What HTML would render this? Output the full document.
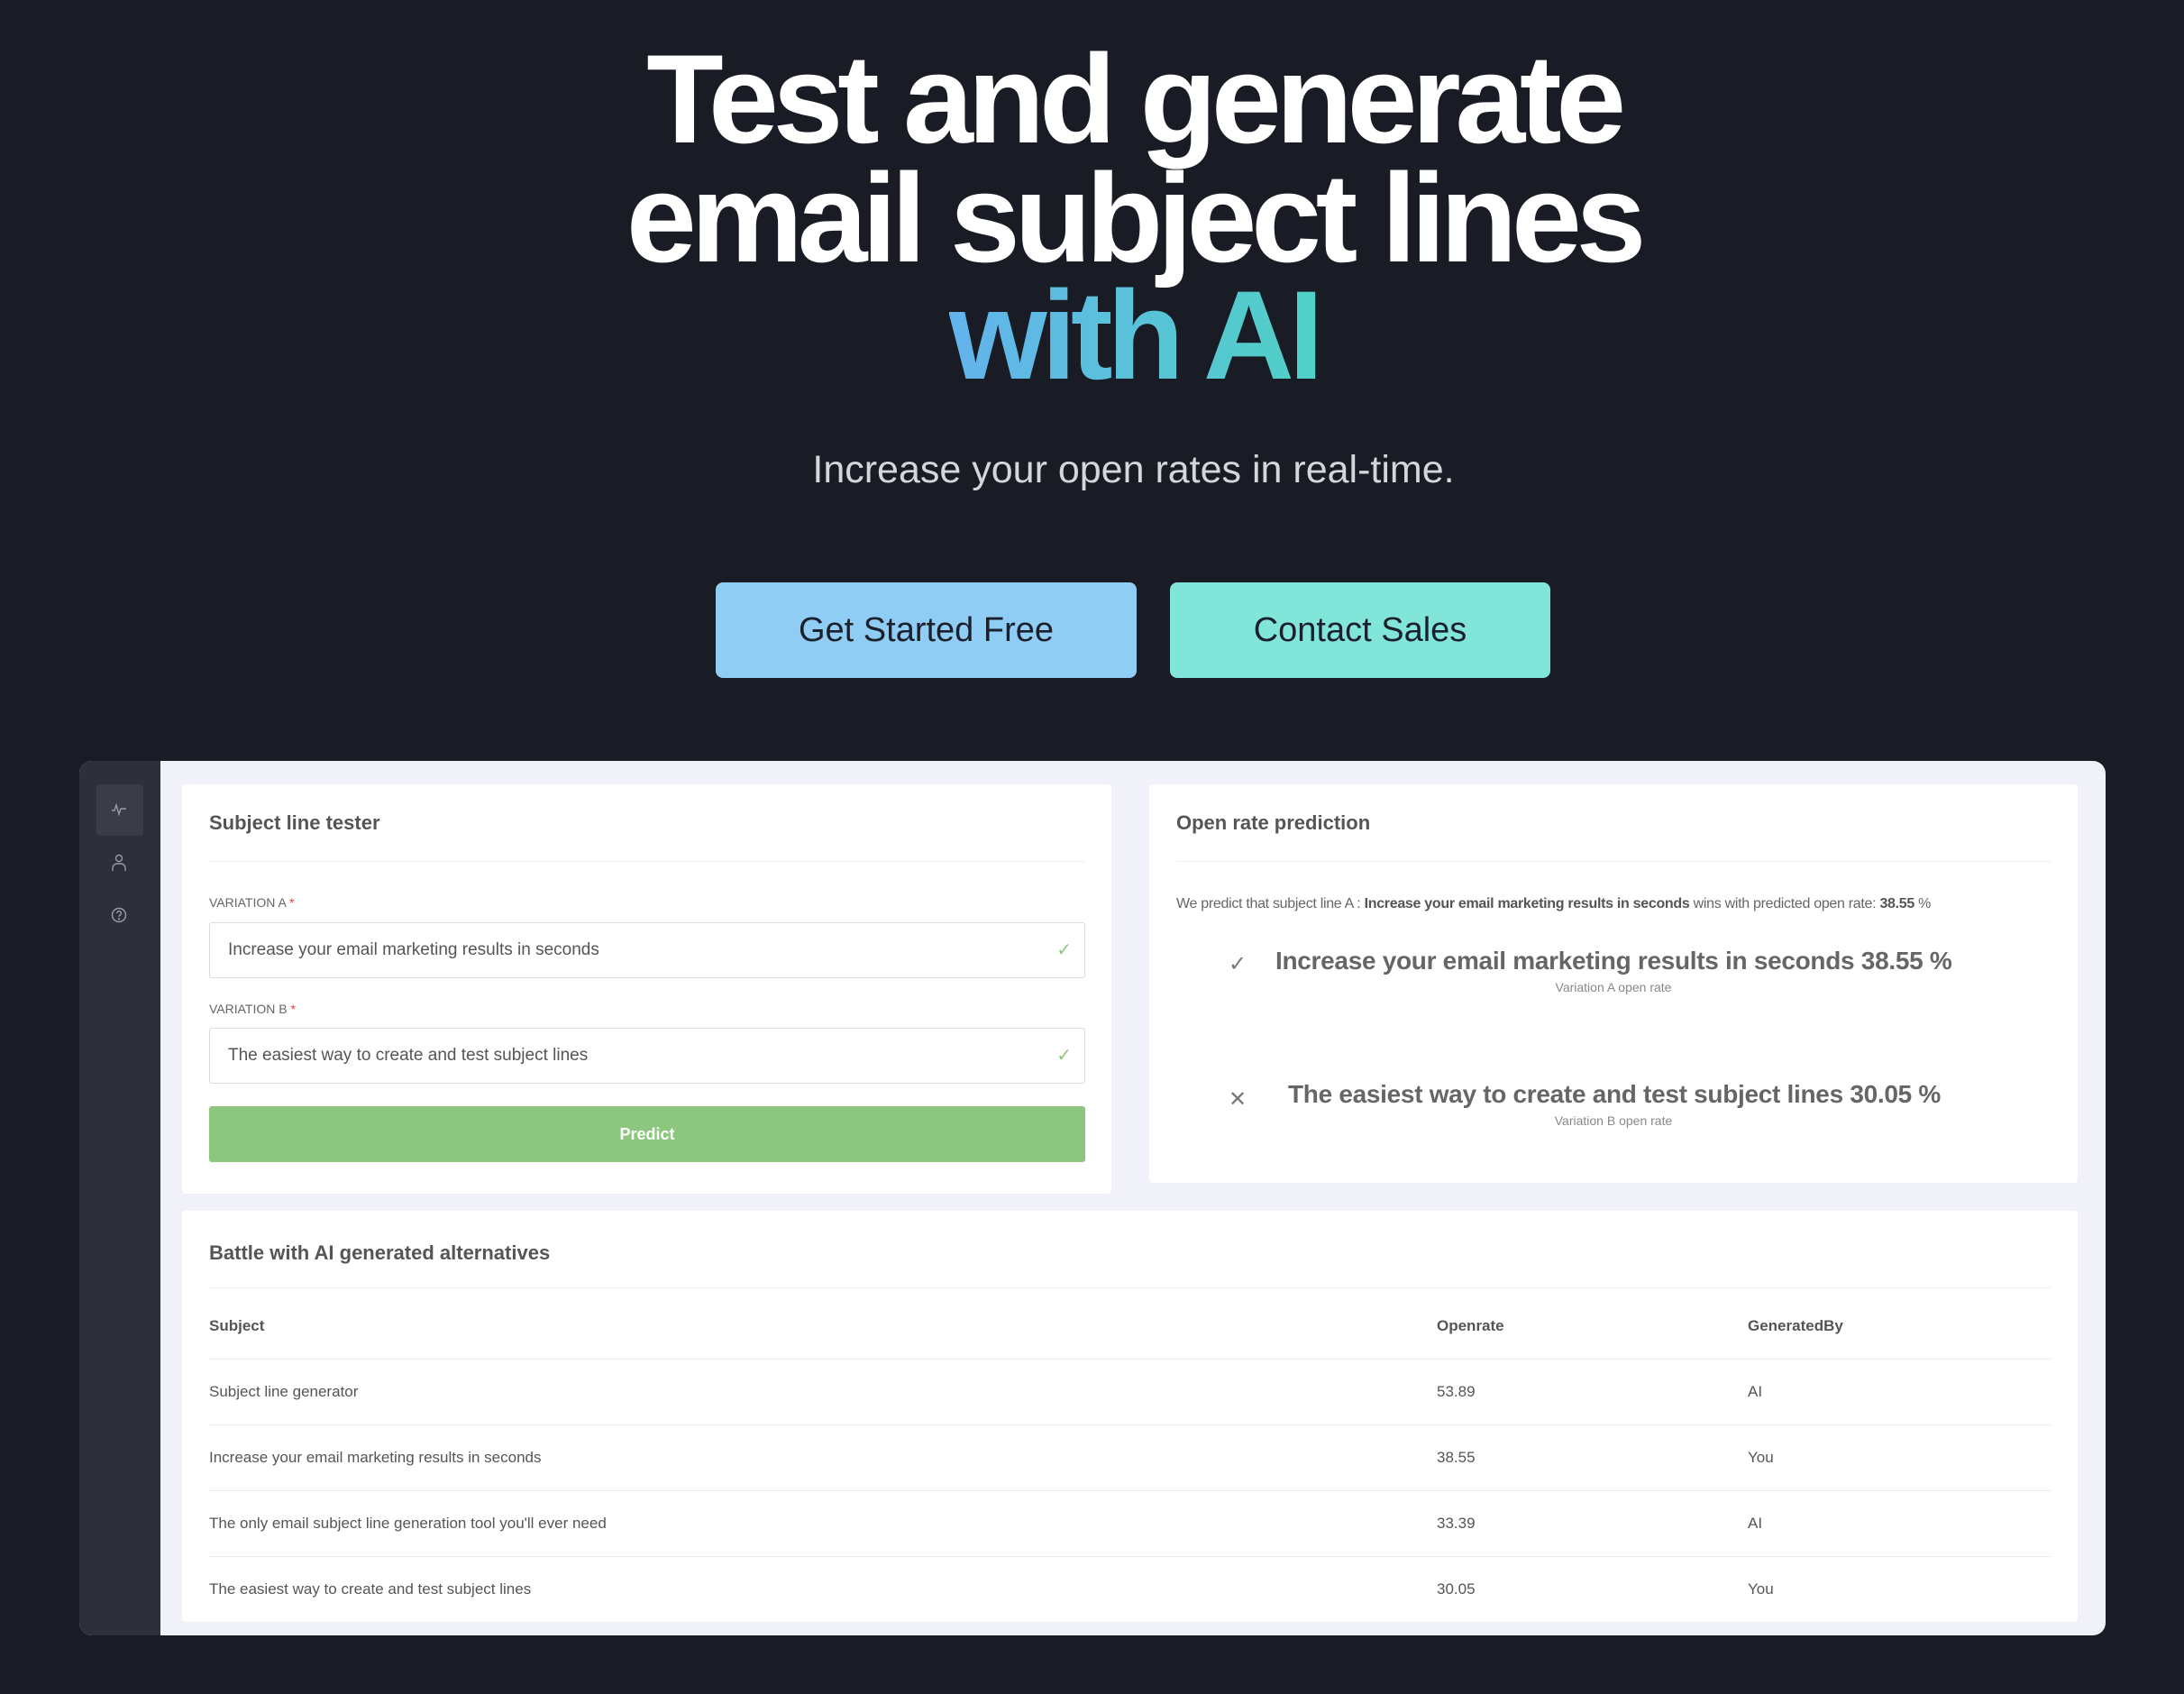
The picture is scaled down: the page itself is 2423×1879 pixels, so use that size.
<!DOCTYPE html>
<html><head><meta charset="utf-8"><style>
*{margin:0;padding:0;box-sizing:border-box}
body{width:2423px;height:1879px;background:#1a1c25;font-family:"Liberation Sans",sans-serif;position:relative;overflow:hidden}
.h{position:absolute;left:46px;width:2423px;text-align:center;color:#fff;font-weight:700;font-size:140px;letter-spacing:-6.3px;line-height:131px}
.grad{background:linear-gradient(90deg,#63b3ed,#4fd1c5);-webkit-background-clip:text;background-clip:text;color:transparent}
.sub{position:absolute;top:497px;left:46px;width:2423px;text-align:center;color:#d4d6dd;font-size:43px}
.btn{position:absolute;top:646px;height:106px;border-radius:8px;font-size:38px;color:#1a202c;display:flex;align-items:center;justify-content:center;font-weight:500}
.panel{position:absolute;left:88px;top:844px;width:2248px;height:970px;background:#f1f2f9;border-radius:14px;overflow:hidden}
.side{position:absolute;left:0;top:0;width:90px;height:100%;background:#2d2f3a}
.card{position:absolute;background:#fff;border-radius:4px}
.t{position:absolute;color:#555;font-size:22px;font-weight:700}
.div{position:absolute;height:1px;background:#eeeef2}
.lbl{position:absolute;font-size:14px;color:#666}
.lbl b{color:#e53e3e;font-weight:400}
.inp{position:absolute;left:30px;width:972px;height:62px;border:1px solid #ddd;border-radius:3px;font-size:19px;color:#555;padding-left:20px;line-height:60px}
.inp span{position:absolute;right:14px;color:#8dc67e;font-size:20px}
.row{position:absolute;left:30px;right:30px;font-size:17px;color:#555;height:73px;border-bottom:1px solid #e8e8ee}
.row span{position:absolute;top:26px}
</style></head><body>
<div class="h" style="top:44px">Test and generate</div>
<div class="h" style="top:176px">email subject lines</div>
<div class="h" style="top:306px"><span class="grad">with AI</span></div>
<div class="sub">Increase your open rates in real-time.</div>
<div class="btn" style="left:794px;width:467px;background:#90cdf4">Get Started Free</div>
<div class="btn" style="left:1298px;width:422px;background:#81e6d9">Contact Sales</div>
<div class="panel">
 <div class="side">
  <div style="position:absolute;left:19px;top:26px;width:52px;height:57px;background:#3a3c48;border-radius:4px"></div>
  <svg style="position:absolute;left:34px;top:44px" width="20" height="20" viewBox="0 0 20 20" fill="none" stroke="#9a9cab" stroke-width="1.4"><path d="M2 11h3l2-6 3 10 2-6h6"/></svg>
  <svg style="position:absolute;left:34px;top:102px" width="20" height="22" viewBox="0 0 20 22" fill="none" stroke="#9a9cab" stroke-width="1.4"><circle cx="10" cy="6" r="3.5"/><path d="M3 20v-3a5 5 0 0 1 5-5h4a5 5 0 0 1 5 5v3"/></svg>
  <svg style="position:absolute;left:34px;top:161px" width="20" height="20" viewBox="0 0 20 20" fill="none" stroke="#9a9cab" stroke-width="1.4"><circle cx="10" cy="10" r="7.5"/><path d="M7.8 8a2.3 2.3 0 1 1 3 2.2c-.6.3-.8.8-.8 1.5"/><circle cx="10" cy="14.3" r=".5"/></svg>
 </div>
 <div class="card" style="left:114px;top:26px;width:1031px;height:454px">
  <div class="t" style="left:30px;top:30px">Subject line tester</div>
  <div class="div" style="left:30px;right:30px;top:85px"></div>
  <div class="lbl" style="left:30px;top:123px">VARIATION A <b>*</b></div>
  <div class="inp" style="top:153px">Increase your email marketing results in seconds<span>✓</span></div>
  <div class="lbl" style="left:30px;top:241px">VARIATION B <b>*</b></div>
  <div class="inp" style="top:270px">The easiest way to create and test subject lines<span>✓</span></div>
  <div style="position:absolute;left:30px;top:357px;width:972px;height:62px;background:#8dc67e;border-radius:3px;color:#fff;font-weight:700;font-size:18px;text-align:center;line-height:62px">Predict</div>
 </div>
 <div class="card" style="left:1187px;top:26px;width:1030px;height:442px">
  <div class="t" style="left:30px;top:30px">Open rate prediction</div>
  <div class="div" style="left:30px;right:30px;top:85px"></div>
  <div style="position:absolute;left:30px;top:124px;font-size:16px;color:#666;white-space:nowrap;letter-spacing:-0.3px">We predict that subject line A : <b style="color:#555">Increase your email marketing results in seconds</b> wins with predicted open rate: <b style="color:#555">38.55</b> %</div>
  <div style="position:absolute;left:88px;top:185px;font-size:24px;color:#777">✓</div>
  <div style="position:absolute;left:140px;top:180px;font-size:28px;font-weight:700;color:#666;white-space:nowrap;letter-spacing:-0.3px">Increase your email marketing results in seconds 38.55 %</div>
  <div style="position:absolute;left:0;width:1030px;text-align:center;top:217px;font-size:14px;color:#888">Variation A open rate</div>
  <div style="position:absolute;left:88px;top:335px;font-size:24px;color:#777">✕</div>
  <div style="position:absolute;left:154px;top:328px;font-size:28px;font-weight:700;color:#666;white-space:nowrap;letter-spacing:-0.3px">The easiest way to create and test subject lines 30.05 %</div>
  <div style="position:absolute;left:0;width:1030px;text-align:center;top:365px;font-size:14px;color:#888">Variation B open rate</div>
 </div>
 <div class="card" style="left:114px;top:499px;width:2103px;height:456px">
  <div class="t" style="left:30px;top:34px">Battle with AI generated alternatives</div>
  <div class="div" style="left:30px;right:30px;top:85px"></div>
  <div class="row" style="top:92px;font-weight:700"><span style="left:0">Subject</span><span style="left:1362px">Openrate</span><span style="left:1707px">GeneratedBy</span></div>
  <div class="row" style="top:165px"><span style="left:0">Subject line generator</span><span style="left:1362px">53.89</span><span style="left:1707px">AI</span></div>
  <div class="row" style="top:238px"><span style="left:0">Increase your email marketing results in seconds</span><span style="left:1362px">38.55</span><span style="left:1707px">You</span></div>
  <div class="row" style="top:311px"><span style="left:0">The only email subject line generation tool you'll ever need</span><span style="left:1362px">33.39</span><span style="left:1707px">AI</span></div>
  <div class="row" style="top:384px;border:none"><span style="left:0">The easiest way to create and test subject lines</span><span style="left:1362px">30.05</span><span style="left:1707px">You</span></div>
 </div>
</div>
</body></html>
